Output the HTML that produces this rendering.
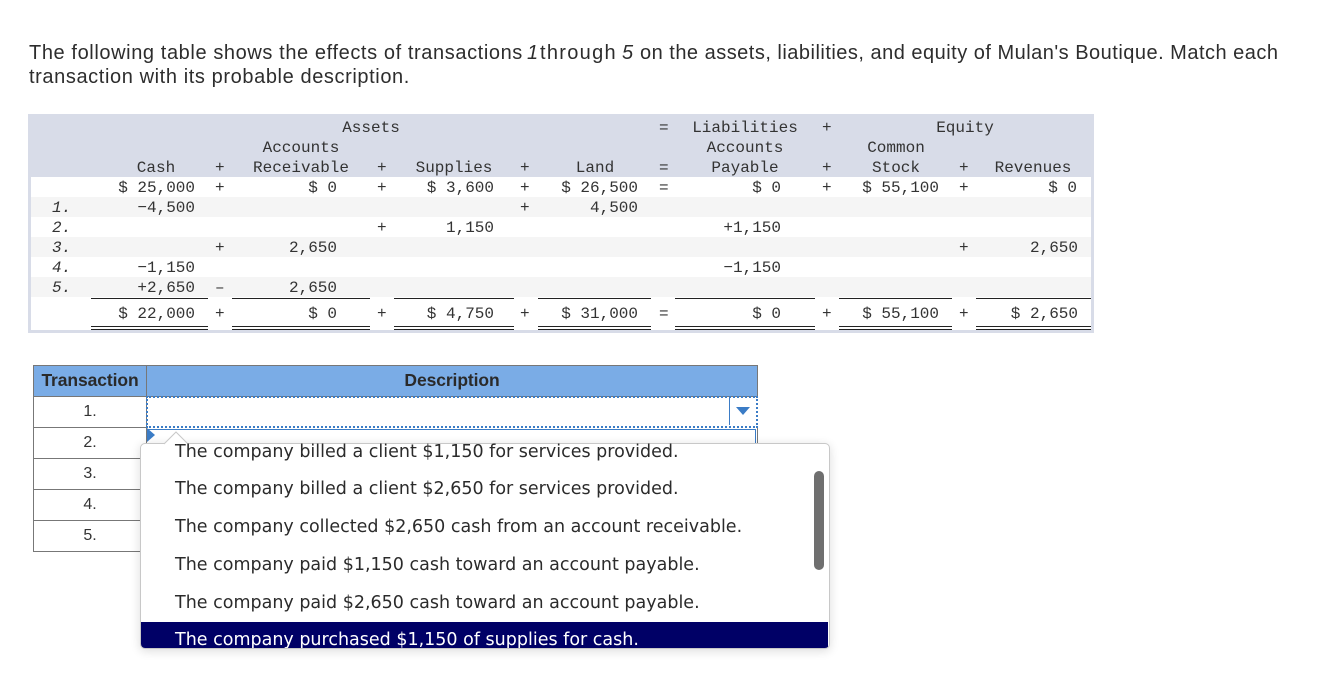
<!DOCTYPE html>
<html><head><meta charset="utf-8">
<style>
html,body{margin:0;padding:0;background:#fff;width:1330px;height:691px;overflow:hidden}
.a{position:absolute}
.p{position:absolute;font:20px/24px "Liberation Sans",sans-serif;color:#2d2d2d;white-space:nowrap}
.m{position:absolute;font:16px/20px "Liberation Mono",monospace;color:#333;white-space:pre;height:20px;margin-top:1px}
.r{text-align:right;width:140px}
.c{text-align:center;width:200px}
.l{position:absolute;height:1px;background:#222}
.d{position:absolute;height:4px;box-sizing:border-box;border-top:1px solid #222;border-bottom:1px solid #222}
.t{position:absolute;font:16px/20px "Liberation Sans",sans-serif;color:#333;text-align:center;left:34px;width:112px}
.o{position:absolute;left:175px;font:17.5px/24px "DejaVu Sans",sans-serif;color:#2b2b2b;white-space:nowrap}
</style></head><body>
<div class="p" style="left:29px;top:41px;letter-spacing:.6px">The following table shows the effects of transactions</div>
<div class="p" style="left:527px;top:41px"><i>1</i></div>
<div class="p" style="left:540px;top:41px;letter-spacing:1.3px">through</div>
<div class="p" style="left:622px;top:41px"><i>5</i></div>
<div class="p" style="left:640px;top:41px;letter-spacing:.49px">on the assets, liabilities, and equity of Mulan's Boutique. Match each</div>
<div class="p" style="left:29px;top:65px;letter-spacing:.6px">transaction with its probable description.</div>

<div class="a" style="left:28px;top:114px;width:1066px;height:219px;background:#d8dce8"></div>
<div class="a" style="left:31px;top:177px;width:1060px;height:153px;background:#fff"></div>
<div class="a" style="left:31px;top:197px;width:1060px;height:20px;background:#f5f5f5"></div>
<div class="a" style="left:31px;top:237px;width:1060px;height:20px;background:#f5f5f5"></div>
<div class="a" style="left:31px;top:277px;width:1060px;height:20px;background:#f5f5f5"></div>

<div class="m c" style="left:271px;top:117px">Assets</div>
<div class="m c" style="left:201px;top:137px">Accounts</div>
<div class="m c" style="left:201px;top:157px">Receivable</div>
<div class="m c" style="left:56px;top:157px">Cash</div>
<div class="m c" style="left:354px;top:157px">Supplies</div>
<div class="m c" style="left:495px;top:157px">Land</div>
<div class="m c" style="left:645px;top:117px">Liabilities</div>
<div class="m c" style="left:645px;top:137px">Accounts</div>
<div class="m c" style="left:645px;top:157px">Payable</div>
<div class="m c" style="left:865px;top:117px">Equity</div>
<div class="m c" style="left:796px;top:137px">Common</div>
<div class="m c" style="left:796px;top:157px">Stock</div>
<div class="m c" style="left:933px;top:157px">Revenues</div>

<div class="m" style="left:659px;top:117px">=</div><div class="m" style="left:822px;top:117px">+</div>
<div class="m" style="left:215px;top:157px">+</div><div class="m" style="left:377px;top:157px">+</div><div class="m" style="left:520px;top:157px">+</div><div class="m" style="left:659px;top:157px">=</div><div class="m" style="left:822px;top:157px">+</div><div class="m" style="left:959px;top:157px">+</div>
<div class="m" style="left:215px;top:177px">+</div><div class="m" style="left:377px;top:177px">+</div><div class="m" style="left:520px;top:177px">+</div><div class="m" style="left:659px;top:177px">=</div><div class="m" style="left:822px;top:177px">+</div><div class="m" style="left:959px;top:177px">+</div>
<div class="m" style="left:520px;top:197px">+</div>
<div class="m" style="left:377px;top:217px">+</div>
<div class="m" style="left:215px;top:237px">+</div><div class="m" style="left:959px;top:237px">+</div>
<div class="m" style="left:215px;top:277px">&#8211;</div>
<div class="m" style="left:215px;top:303px">+</div><div class="m" style="left:377px;top:303px">+</div><div class="m" style="left:520px;top:303px">+</div><div class="m" style="left:659px;top:303px">=</div><div class="m" style="left:822px;top:303px">+</div><div class="m" style="left:959px;top:303px">+</div>

<div class="m" style="left:52px;top:197px"><i>1.</i></div>
<div class="m" style="left:52px;top:217px"><i>2.</i></div>
<div class="m" style="left:52px;top:237px"><i>3.</i></div>
<div class="m" style="left:52px;top:257px"><i>4.</i></div>
<div class="m" style="left:52px;top:277px"><i>5.</i></div>

<div class="m r" style="left:55px;top:177px">$ 25,000</div>
<div class="m r" style="left:197px;top:177px">$ 0</div>
<div class="m r" style="left:354px;top:177px">$ 3,600</div>
<div class="m r" style="left:498px;top:177px">$ 26,500</div>
<div class="m r" style="left:641px;top:177px">$ 0</div>
<div class="m r" style="left:799px;top:177px">$ 55,100</div>
<div class="m r" style="left:937px;top:177px">$ 0</div>

<div class="m r" style="left:55px;top:197px">&#8722;4,500</div>
<div class="m r" style="left:498px;top:197px">4,500</div>
<div class="m r" style="left:354px;top:217px">1,150</div>
<div class="m r" style="left:641px;top:217px">+1,150</div>
<div class="m r" style="left:197px;top:237px">2,650</div>
<div class="m r" style="left:938px;top:237px">2,650</div>
<div class="m r" style="left:55px;top:257px">&#8722;1,150</div>
<div class="m r" style="left:641px;top:257px">&#8722;1,150</div>
<div class="m r" style="left:55px;top:277px">+2,650</div>
<div class="m r" style="left:197px;top:277px">2,650</div>

<div class="m r" style="left:55px;top:303px">$ 22,000</div>
<div class="m r" style="left:197px;top:303px">$ 0</div>
<div class="m r" style="left:354px;top:303px">$ 4,750</div>
<div class="m r" style="left:498px;top:303px">$ 31,000</div>
<div class="m r" style="left:641px;top:303px">$ 0</div>
<div class="m r" style="left:799px;top:303px">$ 55,100</div>
<div class="m r" style="left:938px;top:303px">$ 2,650</div>

<div class="l" style="left:91px;width:117px;top:298px"></div><div class="d" style="left:91px;width:117px;top:326px"></div>
<div class="l" style="left:232px;width:138px;top:298px"></div><div class="d" style="left:232px;width:138px;top:326px"></div>
<div class="l" style="left:394px;width:120px;top:298px"></div><div class="d" style="left:394px;width:120px;top:326px"></div>
<div class="l" style="left:538px;width:113px;top:298px"></div><div class="d" style="left:538px;width:113px;top:326px"></div>
<div class="l" style="left:675px;width:140px;top:298px"></div><div class="d" style="left:675px;width:140px;top:326px"></div>
<div class="l" style="left:839px;width:113px;top:298px"></div><div class="d" style="left:839px;width:113px;top:326px"></div>
<div class="l" style="left:976px;width:115px;top:298px"></div><div class="d" style="left:976px;width:115px;top:326px"></div>

<!-- matching table -->
<div class="a" style="left:33px;top:365px;width:725px;height:32px;box-sizing:border-box;background:#7aace6;border:1px solid #777"></div>
<div class="a" style="left:146px;top:365px;width:1px;height:32px;background:#777"></div>
<div class="a" style="left:33px;top:365px;width:1px;height:187px;background:#777"></div>
<div class="a" style="left:146px;top:396px;width:1px;height:156px;background:#777"></div>
<div class="a" style="left:33px;top:427px;width:113px;height:1px;background:#777"></div>
<div class="a" style="left:33px;top:458px;width:113px;height:1px;background:#777"></div>
<div class="a" style="left:33px;top:489px;width:113px;height:1px;background:#777"></div>
<div class="a" style="left:33px;top:520px;width:113px;height:1px;background:#777"></div>
<div class="a" style="left:33px;top:551px;width:113px;height:1px;background:#777"></div>
<div class="t" style="left:34px;top:370px;font-weight:bold;font-size:17.5px;color:#2a2a2a;letter-spacing:-.1px;width:112px">Transaction</div>
<div class="t" style="left:147px;width:610px;top:370px;font-weight:bold;font-size:17.5px;color:#2a2a2a;letter-spacing:-.1px">Description</div>
<div class="t" style="top:402px">1.</div>
<div class="t" style="top:433px">2.</div>
<div class="t" style="top:464px">3.</div>
<div class="t" style="top:495px">4.</div>
<div class="t" style="top:526px">5.</div>

<div class="a" style="left:146px;top:396px;width:612px;height:32px;box-sizing:border-box;border:2px dotted #3b7cc6"></div>
<div class="a" style="left:729px;top:397px;width:1px;height:28px;background:#3b7cc6"></div>
<svg class="a" style="left:736px;top:407px" width="14" height="8"><path d="M0 0H14L7 8Z" fill="#3b7cc6"/></svg>
<div class="a" style="left:147px;top:429px;width:608px;height:1px;background:#3b7cc6"></div>
<div class="a" style="left:755px;top:429px;width:1px;height:16px;background:#3b7cc6"></div>
<div class="a" style="left:757px;top:428px;width:1px;height:16px;background:#777"></div>
<svg class="a" style="left:147px;top:428px" width="9" height="16"><path d="M0 0L8 7L0 14Z" fill="#3b7cc6"/></svg>

<div class="a" style="left:140px;top:443px;width:690px;height:206px;box-sizing:border-box;background:#fff;border:1px solid #c8c8c8;border-radius:5px;box-shadow:0 2px 10px rgba(0,0,0,.14);overflow:hidden">
<div class="a" style="left:0;top:178px;width:687px;height:26px;background:#006"></div>
<div class="a" style="left:34px;top:184px;font:17.5px/24px 'DejaVu Sans',sans-serif;color:#fff;white-space:nowrap">The company purchased $1,150 of supplies for cash.</div>
<div class="a" style="left:673px;top:27px;width:10px;height:99px;border-radius:5px;background:#6f6f6f"></div>
</div>
<svg class="a" style="left:163px;top:431px" width="26" height="14"><path d="M1 13L13 1L25 13" fill="#fff" stroke="#c8c8c8"/><path d="M2 14H24V13H2Z" fill="#fff"/></svg>
<div class="o" style="top:440px">The company billed a client $1,150 for services provided.</div>
<div class="o" style="top:477px">The company billed a client $2,650 for services provided.</div>
<div class="o" style="top:515px">The company collected $2,650 cash from an account receivable.</div>
<div class="o" style="top:553px">The company paid $1,150 cash toward an account payable.</div>
<div class="o" style="top:591px">The company paid $2,650 cash toward an account payable.</div>
</body></html>
